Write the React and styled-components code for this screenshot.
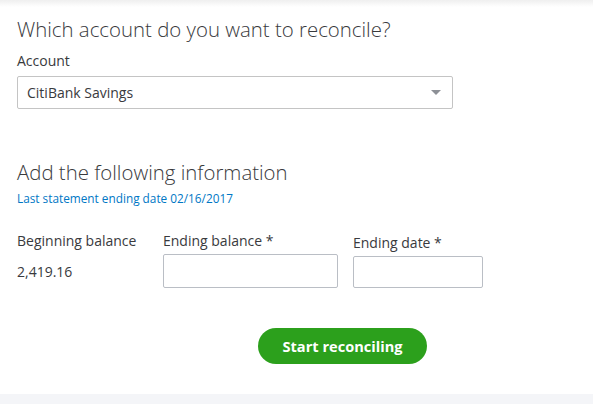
import React from 'react';
import styled, {createGlobalStyle} from 'styled-components';

const GlobalStyle = createGlobalStyle`
    html,
    body {
        margin: 0;
        padding: 0;
        background: #f4f5f8;
        font-family: 'Open Sans', 'Liberation Sans', sans-serif;
        color: #393a3d;
    }
    * {
        box-sizing: border-box;
    }
`;

const Page = styled.div`
    width: 593px;
    height: 404px;
    overflow: hidden;
    background: #f4f5f8;
`;

const Card = styled.div`
    position: relative;
    height: 394px;
    background: #fff;
    padding: 14px 17px 0;
    &::before {
        content: '';
        position: absolute;
        top: 0;
        left: 0;
        right: 0;
        height: 7px;
        background: linear-gradient(#efefef, rgba(255, 255, 255, 0));
    }
`;

const Heading = styled.h2`
    margin: 0;
    font-size: 20.4px;
    font-weight: 300;
    line-height: 30px;
    color: #393a3d;
`;

const Label = styled.div`
    font-size: 14px;
    line-height: 18px;
    color: #393a3d;
    margin-top: ${({$offset}) => $offset || 0}px;
`;

const Select = styled.div`
    margin-top: 6px;
    width: 436px;
    height: 33px;
    border: 1px solid #c4c4c4;
    border-radius: 2px;
    display: flex;
    align-items: center;
    justify-content: space-between;
    padding: 0 11px 0 9px;
    font-size: 14px;
    color: #393a3d;
`;

const Caret = styled.span`
    width: 0;
    height: 0;
    border-left: 5px solid transparent;
    border-right: 5px solid transparent;
    border-top: 5px solid #8d9096;
`;

const Section = styled.div`
    margin-top: ${({$top}) => $top}px;
`;

const Hint = styled.div`
    font-size: 11.8px;
    line-height: 16px;
    color: #0077c5;
    margin-top: 3px;
`;

const Fields = styled.div`
    display: flex;
    margin-top: 26px;
`;

const Field = styled.div`
    width: ${({$w}) => $w}px;
    padding-top: ${({$pt}) => $pt || 0}px;
`;

const Value = styled.div`
    margin-top: 12px;
    font-size: 14px;
    color: #393a3d;
`;

const Input = styled.div`
    margin-top: 4px;
    width: ${({$w}) => $w}px;
    height: ${({$h}) => $h}px;
    border: 1px solid #babec5;
    border-radius: 2px;
`;

const Actions = styled.div`
    display: flex;
    margin-top: 40px;
    padding-left: 241px;
`;

const Button = styled.button`
    width: 169px;
    height: 36px;
    border: none;
    border-radius: 18px;
    background: #2ca01c;
    color: #fff;
    font-family: 'Open Sans', 'Liberation Sans', sans-serif;
    font-weight: 700;
    font-size: 14.6px;
`;

export default function App() {
    return (
        <Page>
            <GlobalStyle />
            <Card>
                <Heading>Which account do you want to reconcile?</Heading>
                <Label $offset={8}>Account</Label>
                <Select>
                    <span>CitiBank Savings</span>
                    <Caret />
                </Select>
                <Section $top={48}>
                    <Heading>Add the following information</Heading>
                    <Hint>Last statement ending date 02/16/2017</Hint>
                </Section>
                <Fields>
                    <Field $w={146}>
                        <Label>Beginning balance</Label>
                        <Value>2,419.16</Value>
                    </Field>
                    <Field $w={190}>
                        <Label>Ending balance *</Label>
                        <Input $w={175} $h={34} />
                    </Field>
                    <Field $w={140} $pt={2}>
                        <Label>Ending date *</Label>
                        <Input $w={130} $h={32} />
                    </Field>
                </Fields>
                <Actions>
                    <Button>Start reconciling</Button>
                </Actions>
            </Card>
        </Page>
    );
}
